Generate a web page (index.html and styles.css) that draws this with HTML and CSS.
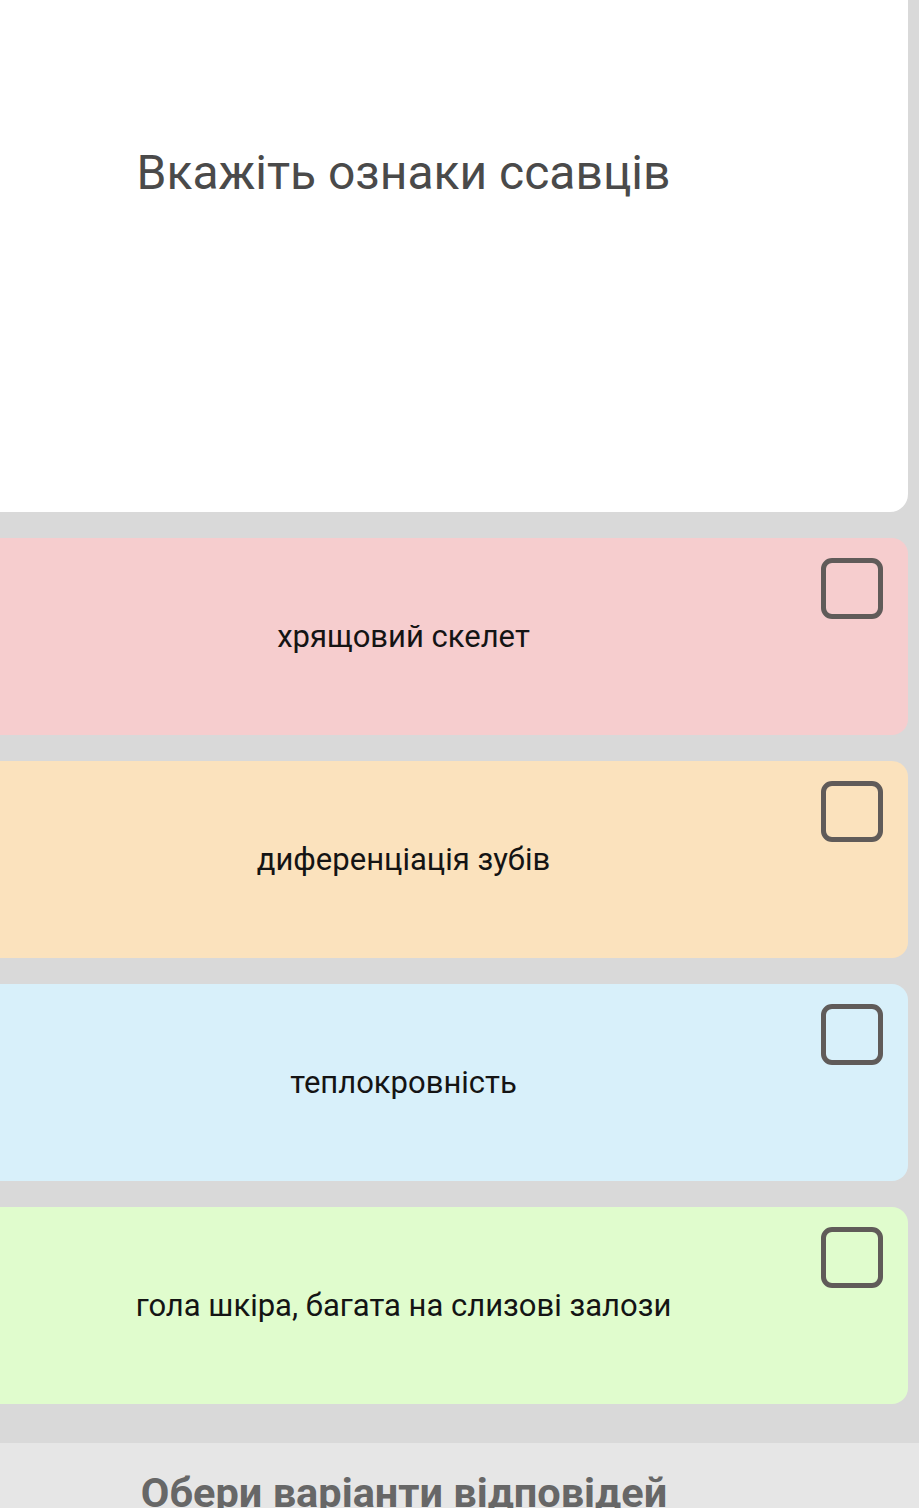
FILE: index.html
```html
<!DOCTYPE html>
<html lang="uk">
<head>
<meta charset="utf-8">
<title>Вкажіть ознаки ссавців</title>
<link rel="stylesheet" href="styles.css">
</head>
<body>
<main class="quiz">
  <section class="question">
    <p class="question-text">Вкажіть ознаки ссавців</p>
  </section>
  <div class="options">
    <div class="option option-red">
      <span class="option-text">хрящовий скелет</span>
      <span class="checkbox"></span>
    </div>
    <div class="option option-orange">
      <span class="option-text">диференціація зубів</span>
      <span class="checkbox"></span>
    </div>
    <div class="option option-blue">
      <span class="option-text">теплокровність</span>
      <span class="checkbox"></span>
    </div>
    <div class="option option-green">
      <span class="option-text">гола шкіра, багата на слизові залози</span>
      <span class="checkbox"></span>
    </div>
  </div>
  <footer class="footer">
    <span class="footer-text">Обери варіанти відповідей</span>
  </footer>
</main>
</body>
</html>
```

FILE: styles.css
```css
html, body {
  margin: 0;
  padding: 0;
}
body {
  background: #d9d9d9;
  font-family: Roboto, "Noto Sans", "Liberation Sans", sans-serif;
  height: 1508px;
  overflow: hidden;
}
.quiz {
  display: flex;
  flex-direction: column;
}
.question {
  margin-left: -20px;
  width: 928px;
  height: 512px;
  box-sizing: border-box;
  background: #ffffff;
  border-radius: 0 0 18px 0;
  padding: 142px 101px 0 20px;
  text-align: center;
}
.question-text {
  margin: 0;
  font-size: 48px;
  line-height: 62px;
  color: #4a4a4a;
  font-weight: 400;
}
.options {
  display: flex;
  flex-direction: column;
  gap: 26px;
  margin-top: 26px;
}
.option {
  margin-left: -20px;
  width: 928px;
  height: 197px;
  box-sizing: border-box;
  border-radius: 0 16px 16px 0;
  padding-left: 20px;
  display: grid;
  grid-template-columns: 1fr 101px;
}
.option-red { background: #f6cdce; }
.option-orange { background: #fbe2bd; }
.option-blue { background: #d8f0fa; }
.option-green { background: #e0fccd; }
.option-text {
  align-self: center;
  text-align: center;
  font-size: 31px;
  line-height: 38px;
  color: #141414;
}
.checkbox {
  align-self: start;
  margin: 20px 0 0 14px;
  width: 62px;
  height: 61px;
  box-sizing: border-box;
  border: 5px solid #605b59;
  border-radius: 11px;
}
.footer {
  margin-top: 39px;
  background: #e6e6e6;
  height: 80px;
  padding: 20px 111px 0 0;
  box-sizing: border-box;
  text-align: center;
}
.footer-text {
  font-size: 41.5px;
  font-weight: 700;
  line-height: 60px;
  color: #676767;
}
```
